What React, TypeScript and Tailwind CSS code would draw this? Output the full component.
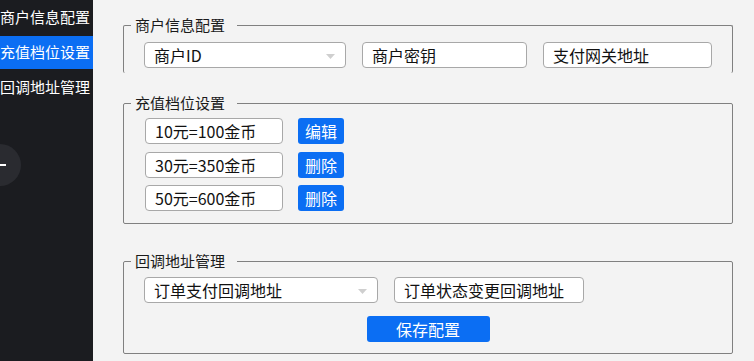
import React from "react";

const font = { fontFamily: '"Noto Sans CJK SC", "Noto Sans", sans-serif' };

function Arrow() {
  return (
    <svg width="9" height="5" viewBox="0 0 9 5" className="absolute right-[10px] top-[11px]">
      <path d="M0 0 L9 0 L4.5 5 Z" fill="#cfcfcf" />
    </svg>
  );
}

function Field({ text, w, combo }: { text: string; w: string; combo?: boolean }) {
  return (
    <div
      className={`relative h-[26px] ${w} shrink-0 whitespace-nowrap rounded-[4px] border border-[#a8a8a8] bg-white pl-[9px] text-[16px] leading-[24px] text-[#111111]`}
    >
      {text}
      {combo && <Arrow />}
    </div>
  );
}

function Btn({ text }: { text: string }) {
  return (
    <div className="flex h-[26px] w-[46px] items-center justify-center rounded-[3px] bg-[#0b6ef3] text-[16px] leading-[24px] text-white">
      {text}
    </div>
  );
}

function Legend({ text, ml }: { text: string; ml: string }) {
  return (
    <legend className={`${ml} pl-[4px] pr-[12px] text-[15px] leading-[18px] text-[#1a1a1a]`}>{text}</legend>
  );
}

export default function App() {
  return (
    <div className="relative flex h-[361px] w-[754px] overflow-hidden" style={font}>
      <div className="flex w-[93px] shrink-0 flex-col gap-[2px] bg-[#1b1c20] pt-[1px]">
        <div className="flex h-[33px] items-center whitespace-nowrap text-[15px] text-white">商户信息配置</div>
        <div className="flex h-[33px] items-center whitespace-nowrap bg-[#0b6ef3] text-[15px] text-white">充值档位设置</div>
        <div className="flex h-[33px] items-center whitespace-nowrap text-[15px] text-white">回调地址管理</div>
      </div>
      <div className="absolute left-[-21px] top-[144px] h-[42px] w-[42px] rounded-full bg-[#2a2b30]">
        <div className="absolute left-[21px] top-[20px] h-[2px] w-[6px] bg-white" />
      </div>

      <div className="flex flex-1 flex-col bg-[#f3f3f3] pl-[30px] pr-[21px] pt-[16px]">
        <fieldset className="rounded-[2px] border border-b-0 border-[#808080] pb-[5px] pl-[20px] pt-[8px]">
          <Legend text="商户信息配置" ml="ml-[-13px]" />
          <div className="flex gap-[16px]">
            <Field text="商户ID" w="w-[202px]" combo />
            <Field text="商户密钥" w="w-[165px]" />
            <Field text="支付网关地址" w="w-[169px]" />
          </div>
        </fieldset>

        <fieldset className="mt-[21px] rounded-[2px] border border-[#808080] pb-[12px] pl-[21px] pt-[6px]">
          <Legend text="充值档位设置" ml="ml-[-14px]" />
          <div className="flex flex-col gap-[7.5px]">
            <div className="flex gap-[15px]">
              <Field text="10元=100金币" w="w-[138px]" />
              <Btn text="编辑" />
            </div>
            <div className="flex gap-[15px]">
              <Field text="30元=350金币" w="w-[138px]" />
              <Btn text="删除" />
            </div>
            <div className="flex gap-[15px]">
              <Field text="50元=600金币" w="w-[138px]" />
              <Btn text="删除" />
            </div>
          </div>
        </fieldset>

        <fieldset className="mt-[28px] rounded-[2px] border border-[#808080] pb-[11px] pl-[20px] pt-[7px]">
          <Legend text="回调地址管理" ml="ml-[-13px]" />
          <div className="flex gap-[16px]">
            <Field text="订单支付回调地址" w="w-[234px]" combo />
            <Field text="订单状态变更回调地址" w="w-[190px]" />
          </div>
          <div className="mt-[13px] flex justify-center pr-[20px]">
            <div className="flex h-[26px] w-[123px] items-center justify-center rounded-[3px] bg-[#0b6ef3] text-[16px] text-white">
              保存配置
            </div>
          </div>
        </fieldset>
      </div>
    </div>
  );
}
